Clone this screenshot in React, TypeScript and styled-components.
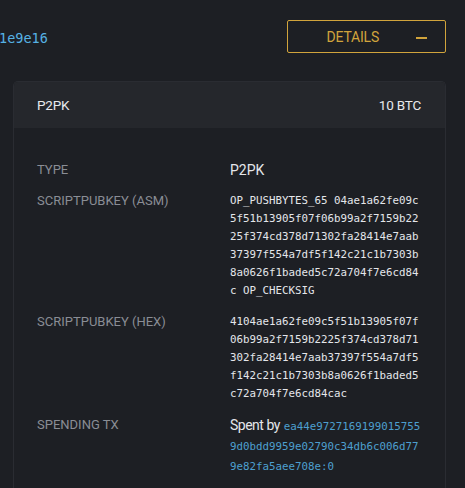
import React from "react";
import styled, { createGlobalStyle } from "styled-components";

const Global = createGlobalStyle`
  html, body { margin: 0; padding: 0; background: #1d1f24; }
  body { font-family: Roboto, "Noto Sans", sans-serif; color: #e6e7ea; overflow: hidden; }
`;

const Page = styled.div`
  width: 465px;
  height: 488px;
  background: #1d1f24;
  overflow: hidden;
`;

const TopBar = styled.div`
  display: flex;
  justify-content: space-between;
  align-items: center;
  padding: 20px 19px 0 0;
  height: 33px;
`;

const TxHash = styled.a`
  font-family: "DejaVu Sans Mono", monospace;
  font-size: 13.5px;
  color: #56b2e4;
  margin-left: -1px;
  margin-top: 2px;
  text-decoration: none;
`;

const DetailsButton = styled.button`
  width: 159px;
  height: 33px;
  box-sizing: border-box;
  border: 1px solid #d1a43c;
  border-radius: 2px;
  background: transparent;
  color: #d1a43c;
  font-family: Roboto, sans-serif;
  font-size: 14px;
  letter-spacing: -0.2px;
  display: flex;
  align-items: center;
  justify-content: flex-end;
  padding: 0 18px 0 0;
  gap: 37px;
`;

const Dash = styled.span`
  display: block;
  width: 11px;
  height: 2px;
  background: #d1a43c;
  margin-top: 2px;
`;

const Card = styled.div`
  margin: 28px 19px 0 13px;
  border: 1px solid #2a2c32;
  border-bottom: none;
  border-radius: 5px 5px 0 0;
  overflow: hidden;
`;

const CardHeader = styled.div`
  display: flex;
  justify-content: space-between;
  align-items: center;
  height: 46px;
  padding: 0 24px 0 23px;
  background: #25272c;
  font-size: 13.5px;
  letter-spacing: -0.2px;
  color: #e8e9ec;
`;

const CardBody = styled.div`
  padding: 26px 24px 40px 23px;
  background: #1d1f24;
`;

const Row = styled.div`
  display: grid;
  grid-template-columns: 193px 192px;
  padding: 6.5px 0;
`;

const Label = styled.div`
  font-size: 13px;
  color: #8a8d95;
  line-height: 18px;
  text-transform: uppercase;
`;

const Value = styled.div<{ $mono?: boolean }>`
  font-family: ${(p) => (p.$mono ? '"DejaVu Sans Mono", monospace' : 'Roboto, sans-serif')};
  font-size: ${(p) => (p.$mono ? "10.8px" : "14px")};
  line-height: 18px;
  color: #e4e6ea;
  word-break: break-all;
`;

const Spent = styled.span`
  letter-spacing: -0.5px;
  margin-right: 0.5px;
`;

const Link = styled.a`
  font-family: "DejaVu Sans Mono", monospace;
  font-size: 10.8px;
  letter-spacing: 0;
  color: #4d9fcf;
  text-decoration: none;
`;

export default function App() {
  return (
    <Page>
      <Global />
      <TopBar>
        <TxHash>1e9e16</TxHash>
        <DetailsButton>
          <span>DETAILS</span>
          <Dash />
        </DetailsButton>
      </TopBar>
      <Card>
        <CardHeader>
          <span>P2PK</span>
          <span>10 BTC</span>
        </CardHeader>
        <CardBody>
          <Row>
            <Label>Type</Label>
            <Value>P2PK</Value>
          </Row>
          <Row>
            <Label>ScriptPubKey (ASM)</Label>
            <Value $mono>
              OP_PUSHBYTES_65 04ae1a62fe09c5f51b13905f07f06b99a2f7159b2225f374cd378d71302fa28414e7aab37397f554a7df5f142c21c1b7303b8a0626f1baded5c72a704f7e6cd84c OP_CHECKSIG
            </Value>
          </Row>
          <Row>
            <Label>ScriptPubKey (HEX)</Label>
            <Value $mono>
              4104ae1a62fe09c5f51b13905f07f06b99a2f7159b2225f374cd378d71302fa28414e7aab37397f554a7df5f142c21c1b7303b8a0626f1baded5c72a704f7e6cd84cac
            </Value>
          </Row>
          <Row>
            <Label>Spending TX</Label>
            <Value>
              <Spent>Spent by</Spent>{" "}
              <Link>ea44e97271691990157559d0bdd9959e02790c34db6c006d779e82fa5aee708e:0</Link>
            </Value>
          </Row>
        </CardBody>
      </Card>
    </Page>
  );
}
